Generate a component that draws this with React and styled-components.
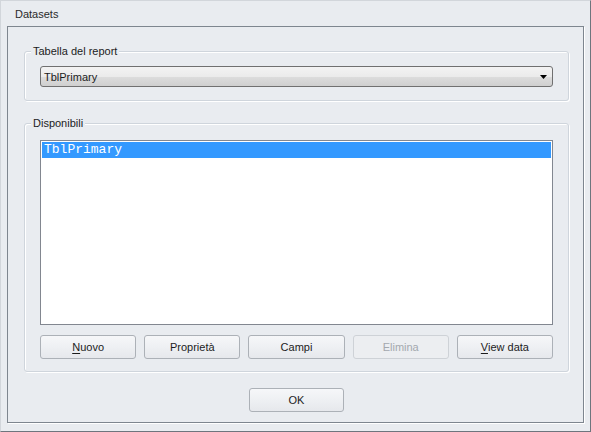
import React from "react";
import styled, { createGlobalStyle } from "styled-components";

const Global = createGlobalStyle`
  html, body { margin: 0; padding: 0; background: #e9ecf0; }
  body { font-family: "Liberation Sans", Arial, sans-serif; font-size: 11px; color: #1c1c1c; }
  * { box-sizing: border-box; }
`;

const Window = styled.div`
  width: 591px;
  height: 432px;
  background: #e9ecf0;
  border-top: 1px solid #d2d6db;
  border-left: 1px solid #d2d6db;
  border-right: 1px solid #6e757d;
  border-bottom: 1px solid #6e757d;
  display: flex;
  flex-direction: column;
`;

const TitleBar = styled.div`
  height: 25px;
  padding-left: 14px;
  display: flex;
  align-items: center;
  font-size: 11px;
  color: #2a2a2a;
`;

const Frame = styled.div`
  flex: 1;
  margin: 0 6px 8px 6px;
  border: 1px solid #7e868f;
  box-shadow: 1px 1px 0 #ffffff;
  padding: 24px 14px 10px 16px;
  display: flex;
  flex-direction: column;
`;

const Group = styled.div`
  position: relative;
  border: 1px solid #cfd5dc;
  border-radius: 3px;
  box-shadow: inset 1px 1px 0 #ffffff, 1px 1px 0 #ffffff;
  padding: ${(p) => p.$pad};
  margin-top: ${(p) => p.$mt || 0}px;
  display: flex;
  flex-direction: column;
`;

const Caption = styled.span`
  position: absolute;
  top: -8px;
  left: 6px;
  padding: 0 2px;
  background: #e9ecf0;
  line-height: 14px;
  font-size: 11px;
  color: #1c1c1c;
`;

const Combo = styled.div`
  height: 21px;
  border: 1px solid #707070;
  border-radius: 3px;
  background: linear-gradient(to bottom, #f3f3f3 0%, #ebebeb 50%, #dddddd 50%, #cfcfcf 100%);
  display: flex;
  align-items: center;
  justify-content: space-between;
  padding: 0 5px 0 3px;
  font-size: 11px;
`;

const Arrow = styled.svg`
  width: 7px;
  height: 4px;
  display: block;
`;

const ListBox = styled.div`
  height: 185px;
  background: #ffffff;
  border: 1px solid #828790;
  padding: 1px;
`;

const ListItem = styled.div`
  height: 16px;
  background: ${(p) => (p.$selected ? "#3399ff" : "transparent")};
  color: ${(p) => (p.$selected ? "#ffffff" : "#000000")};
  font-family: "Liberation Mono", "Courier New", monospace;
  font-size: 13px;
  line-height: 16px;
  padding-left: 2px;
`;

const ButtonRow = styled.div`
  margin-top: 10px;
  display: grid;
  grid-template-columns: repeat(5, 1fr);
  column-gap: 8px;
`;

const Button = styled.div`
  height: 24px;
  width: ${(p) => (p.$w ? p.$w + "px" : "auto")};
  border: 1px solid ${(p) => (p.$disabled ? "#ced2d7" : "#acb1b7")};
  border-radius: 3px;
  background: ${(p) =>
    p.$disabled
      ? "#eceef1"
      : "linear-gradient(to bottom, #f6f7f9 0%, #eef0f3 50%, #e6e8ec 100%)"};
  color: ${(p) => (p.$disabled ? "#a3a8ae" : "#1c1c1c")};
  display: flex;
  align-items: center;
  justify-content: center;
  font-size: 11px;
  u { text-decoration: underline; text-underline-offset: 2px; }
`;

const Footer = styled.div`
  margin-top: 16px;
  display: flex;
  justify-content: center;
`;

export default function App() {
  return (
    <>
      <Global />
      <Window>
        <TitleBar>Datasets</TitleBar>
        <Frame>
          <Group $pad="14px 15px 13px 15px">
            <Caption>Tabella del report</Caption>
            <Combo>
              <span>TblPrimary</span>
              <Arrow viewBox="0 0 7 4">
                <path d="M0 0 H7 L3.5 4 Z" fill="#000" />
              </Arrow>
            </Combo>
          </Group>
          <Group $pad="16px 15px 12px 15px" $mt={22}>
            <Caption>Disponibili</Caption>
            <ListBox>
              <ListItem $selected>TblPrimary</ListItem>
            </ListBox>
            <ButtonRow>
              <Button><span><u>N</u>uovo</span></Button>
              <Button>Proprietà</Button>
              <Button>Campi</Button>
              <Button $disabled>Elimina</Button>
              <Button><span><u>V</u>iew data</span></Button>
            </ButtonRow>
          </Group>
          <Footer>
            <Button $w={95}>OK</Button>
          </Footer>
        </Frame>
      </Window>
    </>
  );
}
